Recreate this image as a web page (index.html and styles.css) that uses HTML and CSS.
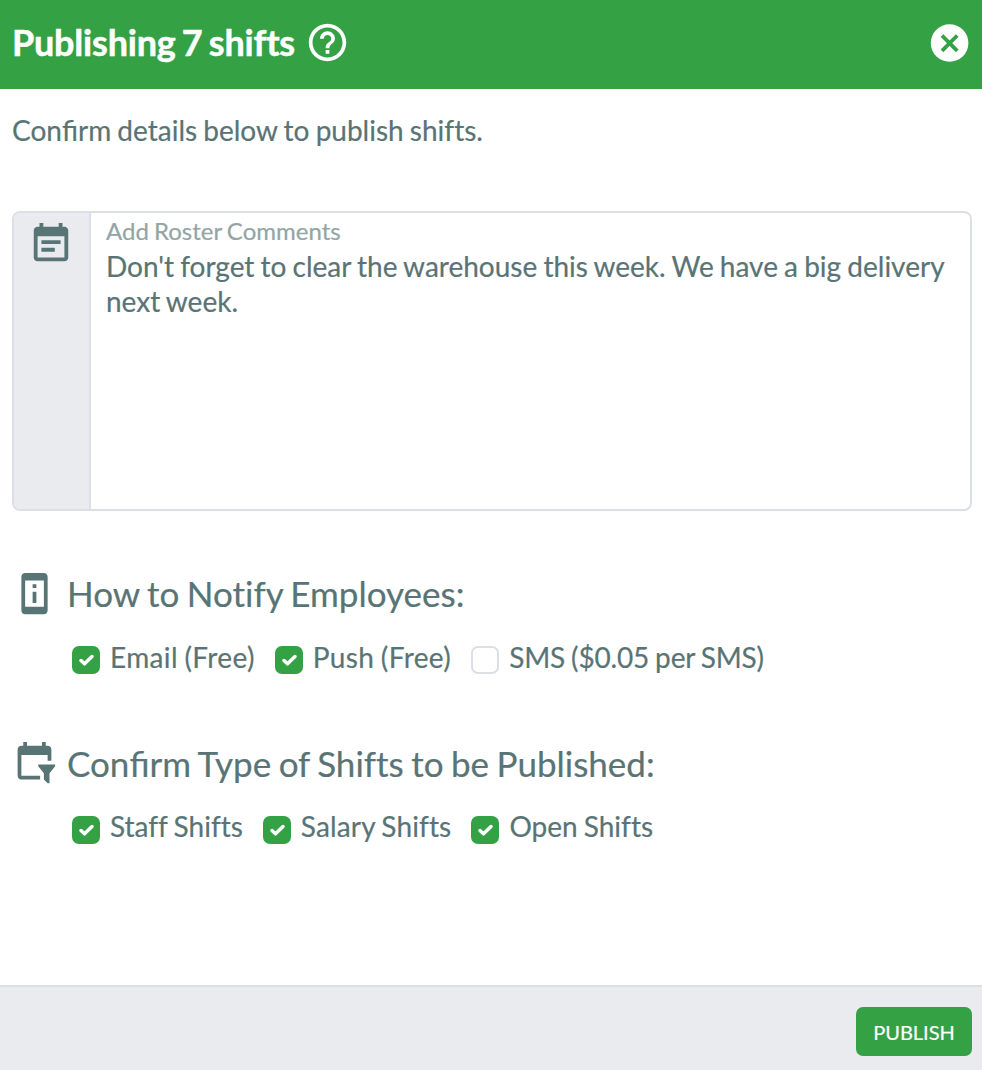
FILE: index.html
```html
<!DOCTYPE html>
<html lang="en">
<head>
    <meta charset="UTF-8">
    <meta name="viewport" content="width=device-width, initial-scale=1.0">
    <title>Publishing 7 shifts</title>
    <link rel="stylesheet" href="styles.css">
</head>
<body>
    <div class="modal">
        <header class="modal-header">
            <h1>Publishing 7 shifts</h1>
            <svg class="icon help" viewBox="0 0 24 24"><path d="M11 18h2v-2h-2v2zm1-16C6.480 2 2 6.480 2 12s4.480 10 10 10 10-4.480 10-10S17.520 2 12 2zm0 18c-4.410 0-8-3.590-8-8s3.590-8 8-8 8 3.590 8 8-3.590 8-8 8zm0-14c-2.210 0-4 1.790-4 4h2c0-1.100.9-2 2-2s2 .9 2 2c0 2-3 1.750-3 5h2c0-2.250 3-2.500 3-5 0-2.210-1.790-4-4-4z"/></svg>
            <button class="close" aria-label="Close">
                <svg viewBox="0 0 38 38"><circle cx="18.600" cy="19" r="18.800" fill="#fff"/><path d="M11 11.500l15.200 15.400M26.200 11.500L11 26.900" stroke="#34a144" stroke-width="3.800"/></svg>
            </button>
        </header>

        <main class="modal-body">
            <p class="intro">Con<span class="lig">fi</span>rm details below to publish shifts.</p>

            <div class="comments">
                <div class="comments-icon">
                    <svg class="icon" viewBox="0 0 24 24"><path d="M17 10H7v2h10v-2zm2-7h-1V1h-2v2H8V1H6v2H5c-1.110 0-1.990.9-1.990 2L3 19c0 1.100.89 2 2 2h14c1.100 0 2-.9 2-2V5c0-1.100-.9-2-2-2zm0 16H5V8h14v11zm-5-5H7v2h7v-2z"/></svg>
                </div>
                <div class="comments-field">
                    <label>Add Roster Comments</label>
                    <p>Don't forget to clear the warehouse this week. We have a big delivery next week.</p>
                </div>
            </div>

            <section class="group">
                <h2>
                    <svg class="icon" viewBox="0 0 24 24"><path d="M13 7h-2v2h2V7zm0 4h-2v6h2v-6zm4-9.990L7 1c-1.100 0-2 .9-2 2v18c0 1.100.9 2 2 2h10c1.100 0 2-.9 2-2V3c0-1.100-.9-1.990-2-1.990zM17 19H7V5h10v14z"/></svg>
                    <span>How to Notify Employees:</span>
                </h2>
                <div class="options">
                    <label class="option"><span class="box checked"><svg viewBox="0 0 28 28"><path d="M9 14.500l3.500 3.300L20 10.500"/></svg></span><span class="wide">Email (Free)</span></label>
                    <label class="option"><span class="box checked"><svg viewBox="0 0 28 28"><path d="M9 14.500l3.500 3.300L20 10.500"/></svg></span><span class="wide">Push (Free)</span></label>
                    <label class="option"><span class="box"></span><span class="narrow">SMS ($0.05 per SMS)</span></label>
                </div>
            </section>

            <section class="group">
                <h2>
                    <svg class="icon filter" viewBox="0 0 24 24"><path d="M15 21H5c-1.100 0-2-.9-2-2V5c0-1.100.9-2 2-2h1V1h2v2h8V1h2v2h1c1.100 0 2 .9 2 2v6h-2V8H5v11h10zM14 13h9v1l-3 3.700V23h-1l-2-2v-3.300L14 14z"/></svg>
                    <span>Con<span class="lig">fi</span>rm Type of Shifts to be Published:</span>
                </h2>
                <div class="options shifts">
                    <label class="option"><span class="box checked"><svg viewBox="0 0 28 28"><path d="M9 14.500l3.500 3.300L20 10.500"/></svg></span><span>Staff Shifts</span></label>
                    <label class="option"><span class="box checked"><svg viewBox="0 0 28 28"><path d="M9 14.500l3.500 3.300L20 10.500"/></svg></span><span class="salary">Salary Shifts</span></label>
                    <label class="option"><span class="box checked"><svg viewBox="0 0 28 28"><path d="M9 14.500l3.500 3.300L20 10.500"/></svg></span><span>Open Shifts</span></label>
                </div>
            </section>
        </main>

        <footer class="modal-footer">
            <button class="publish">PUBLISH</button>
        </footer>
    </div>
</body>
</html>
```
FILE: styles.css
```css
* {
    box-sizing: border-box;
}

body {
    margin: 0;
    background: #fff;
    color: #597475;
    font-family: Lato, sans-serif;
    font-size: 28px;
    line-height: 35px;
    font-feature-settings: "liga" 0;
    word-spacing: -1px;
    -webkit-text-stroke: 0.2px currentColor;
}

h1, h2, p {
    margin: 0;
}

button {
    border: 0;
    padding: 0;
    font-family: inherit;
}

.lig {
    font-feature-settings: "liga" 1;
}

.modal {
    display: flex;
    flex-direction: column;
    height: 1070px;
}

.icon {
    width: 45px;
    height: 45px;
    flex: none;
    fill: currentColor;
}

/* Header */
.modal-header {
    display: flex;
    align-items: center;
    height: 89px;
    padding: 0 13px 4px 12px;
    background: #34a144;
    color: #fff;
}

.modal-header h1 {
    width: 283px;
    padding-bottom: 2px;
    font-size: 36px;
    line-height: 44px;
    font-weight: 700;
    letter-spacing: -0.2px;
    word-spacing: -2.3px;
    white-space: nowrap;
    -webkit-text-stroke: 0.5px currentColor;
}

.help {
    margin-left: 10px;
}

.close {
    width: 38px;
    height: 38px;
    margin-left: auto;
    background: none;
}

.close svg {
    display: block;
    overflow: visible;
}

/* Body */
.modal-body {
    flex: 1;
    padding: 24px 10px 0 12px;
}

.comments {
    display: flex;
    height: 300px;
    margin-top: 63px;
    border: 2px solid #dcdfe5;
    border-radius: 8px;
    overflow: hidden;
}

.comments-icon {
    width: 77px;
    padding: 8px 0 0 14px;
    flex: none;
    background: #eaebef;
    border-right: 2px solid #dcdfe5;
}

.comments-icon .icon {
    width: 46px;
    height: 46px;
}

.comments-field {
    flex: 1;
    padding: 2px 15px 0;
}

.comments-field label {
    display: block;
    margin-bottom: 2px;
    font-size: 24px;
    line-height: 32px;
    color: #93a5a4;
}

.group {
    height: 170px;
}

.comments + .group {
    margin-top: 59px;
}

.group h2 {
    display: flex;
    align-items: center;
    gap: 10px;
    height: 47px;
    font-size: 35px;
    font-weight: 400;
    word-spacing: -1.5px;
    white-space: nowrap;
}

.filter {
    margin-bottom: 3px;
}

.options {
    display: flex;
    gap: 20px;
    margin: 23px 0 0 60px;
}

.option {
    display: flex;
    gap: 10px;
    white-space: nowrap;
}

.wide {
    letter-spacing: 0.37px;
}

.narrow {
    letter-spacing: -0.17px;
}

.salary {
    letter-spacing: 0.13px;
}

.shifts {
    margin-top: 22px;
}

.box {
    width: 28px;
    height: 28px;
    margin-top: 6px;
    flex: none;
    border: 2px solid #dcdfe5;
    border-radius: 7px;
}

.shifts .box {
    margin-top: 7px;
}

.box.checked {
    border: 0;
    background: #34a144;
}

.box svg {
    display: block;
    fill: none;
    stroke: #fff;
    stroke-width: 3.5;
    stroke-linecap: round;
    stroke-linejoin: round;
}

/* Footer */
.modal-footer {
    display: flex;
    justify-content: flex-end;
    height: 85px;
    padding: 20px 10px 0;
    background: #eaebef;
    border-top: 2px solid #dcdfe5;
}

.publish {
    width: 116px;
    height: 49px;
    border-radius: 7px;
    background: #34a144;
    color: #fff;
    font-size: 20px;
}
```
